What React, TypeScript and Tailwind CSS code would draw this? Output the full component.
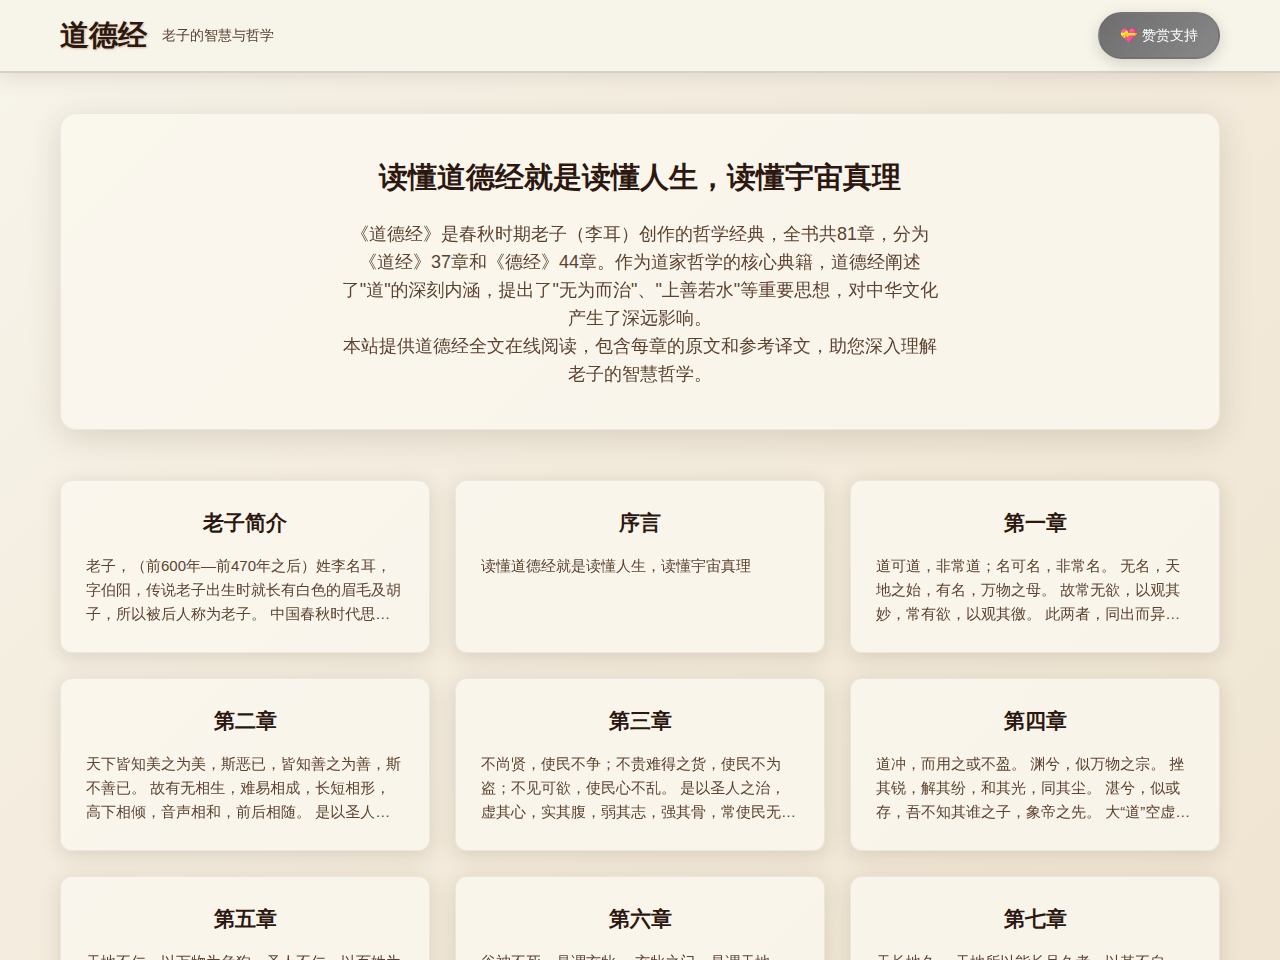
interface Chapter {
  title: string;
  text: string;
}

const chapters: Chapter[] = [
  {
    title: '老子简介',
    text: '老子，（前600年—前470年之后）姓李名耳，字伯阳，传说老子出生时就长有白色的眉毛及胡子，所以被后人称为老子。 中国春秋时代思想家，道家学派的创始人。 老子著有《道德经》，是道家学派的经典著作。',
  },
  { title: '序言', text: '读懂道德经就是读懂人生，读懂宇宙真理' },
  {
    title: '第一章',
    text: '道可道，非常道；名可名，非常名。 无名，天地之始，有名，万物之母。 故常无欲，以观其妙，常有欲，以观其徼。 此两者，同出而异名，同谓之玄，玄之又玄，众妙之门。',
  },
  {
    title: '第二章',
    text: '天下皆知美之为美，斯恶已，皆知善之为善，斯不善已。 故有无相生，难易相成，长短相形，高下相倾，音声相和，前后相随。 是以圣人处无为之事，行不言之教。',
  },
  {
    title: '第三章',
    text: '不尚贤，使民不争；不贵难得之货，使民不为盗；不见可欲，使民心不乱。 是以圣人之治，虚其心，实其腹，弱其志，强其骨，常使民无知无欲，使夫智者不敢为也。',
  },
  {
    title: '第四章',
    text: '道冲，而用之或不盈。 渊兮，似万物之宗。 挫其锐，解其纷，和其光，同其尘。 湛兮，似或存，吾不知其谁之子，象帝之先。 大“道”空虚无形，它的作用又是无穷无尽。',
  },
  {
    title: '第五章',
    text: '天地不仁，以万物为刍狗，圣人不仁，以百姓为刍狗。 天地之间，其犹橐籥乎？ 虚而不屈，动而愈出。 多言数穷，不如守中。',
  },
  {
    title: '第六章',
    text: '谷神不死，是谓玄牝。 玄牝之门，是谓天地根。 绵绵若存，用之不勤。',
  },
  {
    title: '第七章',
    text: '天长地久。 天地所以能长且久者，以其不自生，故能长生。 是以圣人后其身而身先，外其身而身存。 非以其无私邪？故能成其私。',
  },
];

function ChapterCard({ chapter }: { chapter: Chapter }) {
  return (
    <a
      href="#"
      className="block rounded-xl border border-[#696969]/10 bg-[#fbf8ef]/80 p-[25px] shadow-[0_4px_20px_rgba(70,50,30,0.15)]"
    >
      <h3 className="mb-[15px] text-center font-['Liberation_Sans',sans-serif] text-[21px] leading-[33px] font-bold text-[#2c1810]">
        {chapter.title}
      </h3>
      <p className="line-clamp-3 min-h-[73px] text-[15px] leading-[24px] text-[#5c4330]">{chapter.text}</p>
    </a>
  );
}

export default function App() {
  return (
    <div className="min-h-screen bg-[linear-gradient(135deg,#f7f4ea_0%,#f3ebdc_50%,#f0e5d2_100%)] bg-fixed font-['Liberation_Sans','WenQuanYi_Zen_Hei','Noto_Sans_CJK_SC',sans-serif]">
      <header className="border-b-2 border-[#696969]/25 bg-[#f7f4e9] py-3 shadow-[0_4px_20px_rgba(70,50,30,0.12)]">
        <div className="mx-auto flex max-w-[1200px] items-start justify-between px-5">
          <div className="flex items-center gap-[15px]">
            <h1 className="font-['Liberation_Sans',sans-serif] text-[29px] leading-[46px] font-bold text-[#2c1810] [text-shadow:1px_1px_2px_rgba(139,69,19,0.3)]">
              道德经
            </h1>
            <span className="text-sm leading-[22px] text-[#5c4330]">老子的智慧与哲学</span>
          </div>
          <button
            type="button"
            className="flex h-[47px] items-start gap-[5px] rounded-full border-2 border-[#696969]/20 bg-linear-135 from-[#6e6e6e] to-[#888888] px-5 py-[10px] text-sm leading-[22px] text-white shadow-[0_4px_15px_rgba(0,0,0,0.15)]"
          >
            <span>💝</span>
            <span>赞赏支持</span>
          </button>
        </div>
      </header>

      <main className="mx-auto max-w-[1200px] px-5 py-10">
        <section className="mb-[50px] rounded-2xl border border-[#696969]/10 bg-[#fbf8ef]/80 p-10 text-center shadow-[0_8px_32px_rgba(70,50,30,0.15)]">
          <h2 className="mb-5 font-['Liberation_Sans',sans-serif] text-[29px] leading-[46px] font-bold text-[#2c1810]">
            读懂道德经就是读懂人生，读懂宇宙真理
          </h2>
          <p className="mx-auto min-h-[169px] max-w-[600px] text-lg leading-[28px] text-[#5c4330]">
            《道德经》是春秋时期老子（李耳）创作的哲学经典，全书共81章，分为《道经》37章和《德经》44章。作为道家哲学的核心典籍，道德经阐述了"道"的深刻内涵，提出了"无为而治"、"上善若水"等重要思想，对中华文化产生了深远影响。
            <br />
            本站提供道德经全文在线阅读，包含每章的原文和参考译文，助您深入理解老子的智慧哲学。
          </p>
        </section>

        <section className="grid grid-cols-1 gap-[25px] md:grid-cols-3">
          {chapters.map((chapter) => (
            <ChapterCard key={chapter.title} chapter={chapter} />
          ))}
        </section>
      </main>
    </div>
  );
}
